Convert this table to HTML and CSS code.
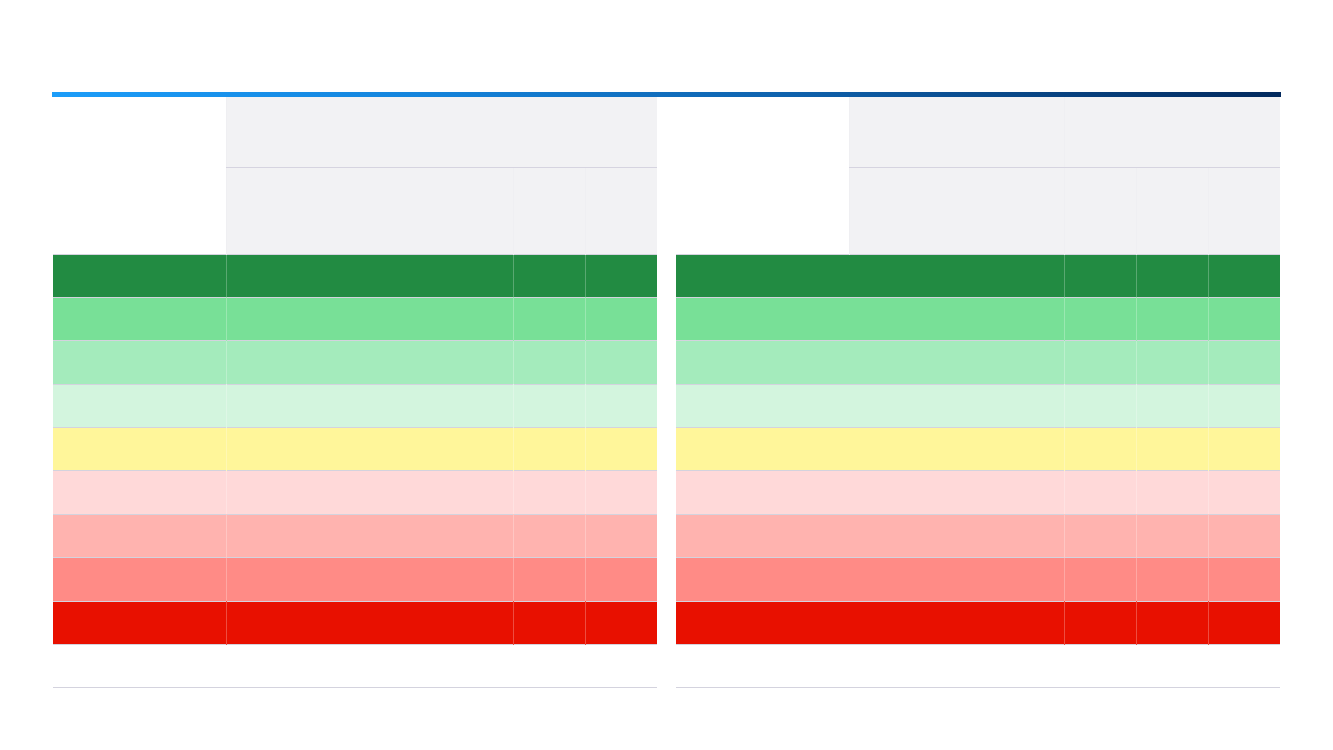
FILE: index.html
```html
<!DOCTYPE html>
<html lang="en">
<head>
    <meta charset="UTF-8">
    <title>Scale</title>
    <link rel="stylesheet" href="styles.css">
</head>
<body>
<div class="page">
    <div class="bar"></div>
    <div class="tables">
        <table class="grid">
            <colgroup>
                <col style="width:173px"><col style="width:287px"><col style="width:72px"><col style="width:72px">
            </colgroup>
            <tr class="h1">
                <th class="blank" rowspan="2"></th><th class="head" colspan="3"></th>
            </tr>
            <tr class="h2">
                <th class="head"></th><th class="head"></th><th class="head"></th>
            </tr>
            <tr class="row c1"><td></td><td></td><td></td><td></td></tr>
            <tr class="row c2"><td></td><td></td><td></td><td></td></tr>
            <tr class="row c3"><td></td><td></td><td></td><td></td></tr>
            <tr class="row c4"><td></td><td></td><td></td><td></td></tr>
            <tr class="row c5"><td></td><td></td><td></td><td></td></tr>
            <tr class="row c6"><td></td><td></td><td></td><td></td></tr>
            <tr class="row c7"><td></td><td></td><td></td><td></td></tr>
            <tr class="row c8"><td></td><td></td><td></td><td></td></tr>
            <tr class="row c9"><td></td><td></td><td></td><td></td></tr>
            <tr class="foot"><td colspan="4"></td></tr>
        </table>
        <table class="grid">
            <colgroup>
                <col style="width:173px"><col style="width:215px"><col style="width:72px"><col style="width:72px"><col style="width:72px">
            </colgroup>
            <tr class="h1">
                <th class="blank" rowspan="2"></th><th class="head"></th><th class="head" colspan="3"></th>
            </tr>
            <tr class="h2">
                <th class="head"></th><th class="head"></th><th class="head"></th><th class="head"></th>
            </tr>
            <tr class="row c1"><td colspan="2"></td><td></td><td></td><td></td></tr>
            <tr class="row c2"><td colspan="2"></td><td></td><td></td><td></td></tr>
            <tr class="row c3"><td colspan="2"></td><td></td><td></td><td></td></tr>
            <tr class="row c4"><td colspan="2"></td><td></td><td></td><td></td></tr>
            <tr class="row c5"><td colspan="2"></td><td></td><td></td><td></td></tr>
            <tr class="row c6"><td colspan="2"></td><td></td><td></td><td></td></tr>
            <tr class="row c7"><td colspan="2"></td><td></td><td></td><td></td></tr>
            <tr class="row c8"><td colspan="2"></td><td></td><td></td><td></td></tr>
            <tr class="row c9"><td colspan="2"></td><td></td><td></td><td></td></tr>
            <tr class="foot"><td colspan="5"></td></tr>
        </table>
    </div>
</div>
</body>
</html>
```

FILE: styles.css
```css
body{
    margin: 0;
    background: #ffffff;
    font-family: "Liberation Sans", Arial, sans-serif;
}
.page{
    width: 1229px;
    margin: 92px 0 0 52px;
}
.bar{
    height: 5px;
    background: linear-gradient(90deg, #1c9df9 0%, #1484dc 30%, #0f62ad 60%, #02295d 100%);
}
.tables{
    display: flex;
    gap: 19px;
    padding: 0 1px;
}
.grid{
    width: 604px;
    table-layout: fixed;
    border-collapse: collapse;
    border-spacing: 0;
}
.grid th,
.grid td{
    padding: 0;
    box-sizing: border-box;
}
.h1{
    height: 70px;
}
.h2{
    height: 87px;
}
.blank{
    background: #ffffff;
}
.head{
    background: #f2f2f4;
    border-left: 1px solid #efeff2;
}
.h1 .head{
    border-bottom: 1px solid #d6d4e0;
}
.row{
    height: 43.4px;
}
.row td{
    border-top: 1px solid #d4d3de;
    border-left: 1px solid rgba(255,255,255,0.25);
}
.row td:first-child{
    border-left: none;
}
.c1{ background: #228b42; }
.c2{ background: #78e097; }
.c3{ background: #a4ebbc; }
.c4{ background: #d3f5de; }
.c5{ background: #fff69a; }
.c6{ background: #ffd9d9; }
.c7{ background: #ffb3af; }
.c8{ background: #ff8b86; }
.c9{ background: #e81000; }
.foot{
    height: 43px;
}
.foot td{
    border-top: 1px solid #d4d3de;
    border-bottom: 1px solid #d4d3de;
    background: #ffffff;
}
```
